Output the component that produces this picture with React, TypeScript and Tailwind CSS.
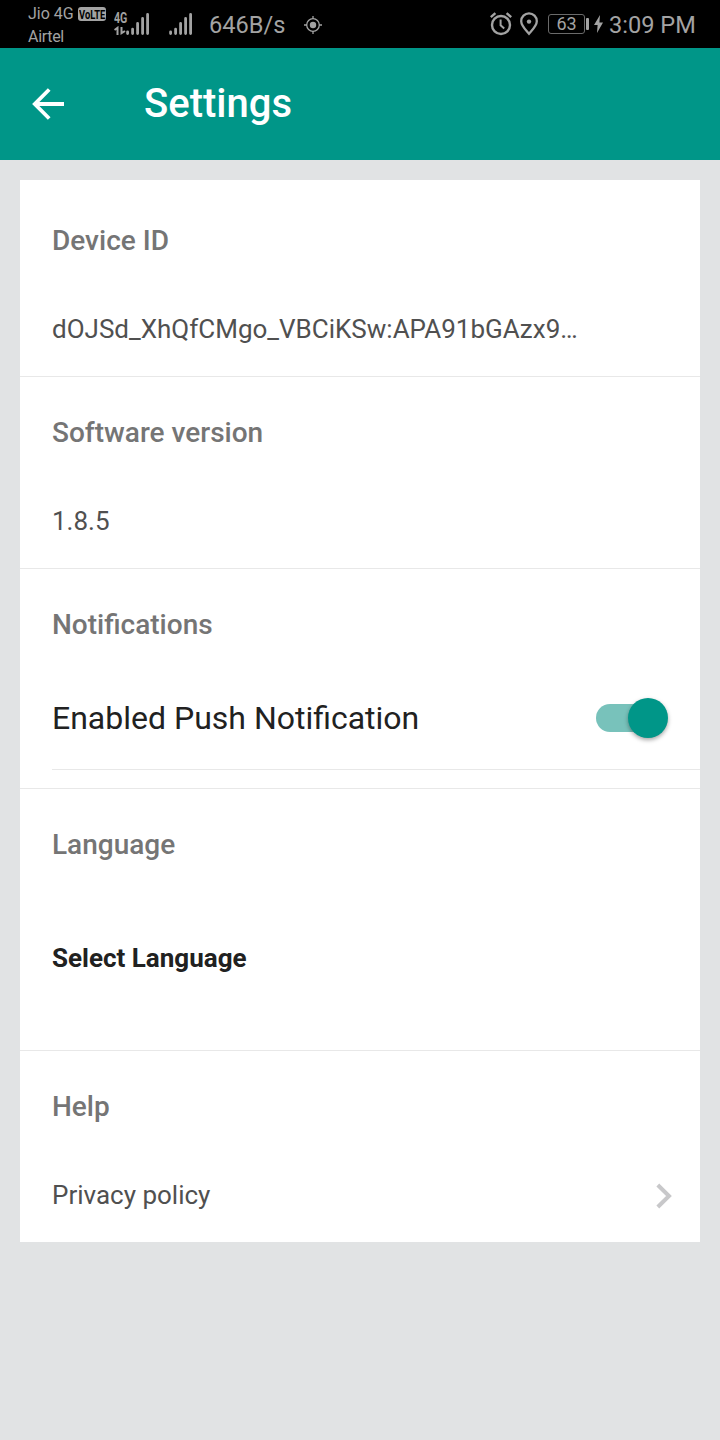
import type { ReactNode } from "react";

function SignalBars() {
  return (
    <svg className="h-6 w-6 shrink-0" viewBox="0 0 24 24" stroke="#a3a3a3" strokeWidth="2.8" strokeLinecap="round">
      <path d="M1.6 19.8V21.6M6.6 17.2V21.6M11.6 11.4V21.6M16.6 6.4V21.6M21.6 2.4V21.6" />
    </svg>
  );
}

function StatusBar() {
  return (
    <div className="flex h-12 bg-black text-[#a3a3a3]">
      <div className="ml-7 mt-[3px] w-[86px] shrink-0 whitespace-nowrap text-[16px]">
        <div className="flex h-[22px] items-center">
          <span className="w-[50px] shrink-0">Jio 4G</span>
          <span className="flex h-[14px] w-[28px] shrink-0 items-center justify-center rounded-[3px] bg-[#a3a3a3] text-[13px] font-bold leading-none text-black">
            <span className="scale-x-[0.72]">VoLTE</span>
          </span>
        </div>
        <div className="flex h-[24px] items-center tracking-[-0.3px]">Airtel</div>
      </div>
      <div className="mt-3 flex w-[12px] shrink-0 flex-col">
        <span className="h-[14px] origin-left scale-x-[0.76] text-[14px] font-bold leading-[13px]">4G</span>
        <svg className="h-[10px] w-[12px]" viewBox="0 0 12 10" fill="none" stroke="#a3a3a3" strokeWidth="2">
          <path d="M.5 4 3.5 1.8V9M7.5 1V7.2L11 5" />
        </svg>
      </div>
      <div className="mt-3">
        <SignalBars />
      </div>
      <div className="ml-[19px] mt-3">
        <SignalBars />
      </div>
      <span className="ml-4 w-[95px] shrink-0 text-[23.6px] leading-[50px]">646B/s</span>
      <svg className="mt-4 h-[18px] w-[18px] shrink-0" viewBox="0 0 18 18" fill="none" stroke="#a3a3a3" strokeWidth="1.3">
        <circle cx="9" cy="9" r="6.3" />
        <circle cx="9" cy="9" r="3.2" fill="#a3a3a3" stroke="none" />
        <path d="M9 0V3M9 15V18M0 9H3M15 9H18" />
      </svg>
      <svg className="ml-[168px] mt-3 h-6 w-[22px] shrink-0" viewBox="0 0 22 24" fill="none" stroke="#a3a3a3" strokeWidth="2.4">
        <circle cx="11" cy="13" r="9" />
        <path d="M.8 5.2 5.4 1.2M16.6 1.2 21.2 5.2" />
        <path d="M10.6 7.5V13.2L14.2 16.4" strokeWidth="2" />
      </svg>
      <svg className="ml-2 mt-3 h-6 w-[18px] shrink-0" viewBox="0 0 18 24" fill="none" stroke="#a3a3a3" strokeWidth="2.3">
        <path d="M9 21.7C5.5 17.7 1.2 13.7 1.2 9.2A7.8 7.8 0 0 1 16.8 9.2C16.8 13.7 12.5 17.7 9 21.7Z" />
        <circle cx="9" cy="9.6" r="2.2" fill="#a3a3a3" stroke="none" />
      </svg>
      <div className="ml-[10px] mt-[14px] flex h-5 w-[37px] shrink-0 items-center justify-center rounded-[3px] border-[1.5px] border-[#6a6a6a] text-[18px] leading-none">
        63
      </div>
      <div className="ml-px mt-[18px] h-3 w-[3px] shrink-0 rounded-[1px] bg-[#a3a3a3]" />
      <svg className="ml-[5px] mt-[15px] h-[18px] w-[9px] shrink-0" viewBox="0 0 9 18" fill="#a3a3a3">
        <path d="M6 0 0 10H3.6L3 18 9 7.5H5.4Z" />
      </svg>
      <span className="ml-[6px] shrink-0 whitespace-nowrap text-[23.6px] leading-[50px]">3:09 PM</span>
    </div>
  );
}

function Section({ title, last, children }: { title: string; last?: boolean; children: ReactNode }) {
  return (
    <section className={last ? "" : "border-b border-[#e8e8e8]"}>
      <h2 className="flex h-28 items-center pl-8 text-[28px] font-medium text-[#757575]">{title}</h2>
      {children}
    </section>
  );
}

export default function App() {
  return (
    <div className="min-h-[1440px] w-[720px] overflow-hidden bg-[#e1e3e4] font-[Roboto,sans-serif]">
      <StatusBar />
      <header className="flex h-28 items-center bg-[#009688] text-white">
        <svg className="ml-8 h-8 w-8" viewBox="0 0 32 32" fill="none" stroke="currentColor" strokeWidth="3.8">
          <path d="M32 16H4M17.2 1.5 2.8 16 17.2 30.5" />
        </svg>
        <h1 className="ml-20 text-[40px] font-medium leading-none">Settings</h1>
      </header>
      <main className="mx-5 mt-5 bg-white pt-[5px]">
        <Section title="Device ID">
          <p className="flex h-[79px] items-start pl-8 pt-3 text-[26px] leading-10 text-[#505050]">
            dOJSd_XhQfCMgo_VBCiKSw:APA91bGAzx9…
          </p>
        </Section>
        <Section title="Software version">
          <p className="flex h-[79px] items-start pl-8 pt-3 text-[26px] leading-10 text-[#505050]">1.8.5</p>
        </Section>
        <Section title="Notifications">
          <div className="mb-[18px] ml-8 flex h-[89px] items-start justify-between border-b border-[#e8e8e8] pr-8">
            <span className="text-[32px] leading-[74px] text-[#212121]">Enabled Push Notification</span>
            <button
              role="switch"
              aria-checked="true"
              aria-label="Enabled Push Notification"
              className="mt-[23px] flex h-7 w-[72px] items-center justify-end rounded-l-full bg-linear-to-r from-[#78c2bb] from-70% to-transparent to-70%"
            >
              <span className="h-10 w-10 shrink-0 rounded-full bg-[#009688] shadow-[0_2px_4px_rgba(0,0,0,0.35)]" />
            </button>
          </div>
        </Section>
        <Section title="Language">
          <p className="h-[149px] pl-8 text-[26px] font-bold leading-[114px] text-[#212121]">Select Language</p>
        </Section>
        <Section title="Help" last>
          <div className="flex h-[79px] items-start justify-between pl-8 pr-7 pt-3 text-[26px] leading-10 text-[#505050]">
            <span>Privacy policy</span>
            <svg className="mt-2 h-[26px] w-4" viewBox="0 0 16 26" fill="none" stroke="#c8c8ca" strokeWidth="4">
              <path d="M1.8 2 13 13 1.8 24" />
            </svg>
          </div>
        </Section>
      </main>
    </div>
  );
}
